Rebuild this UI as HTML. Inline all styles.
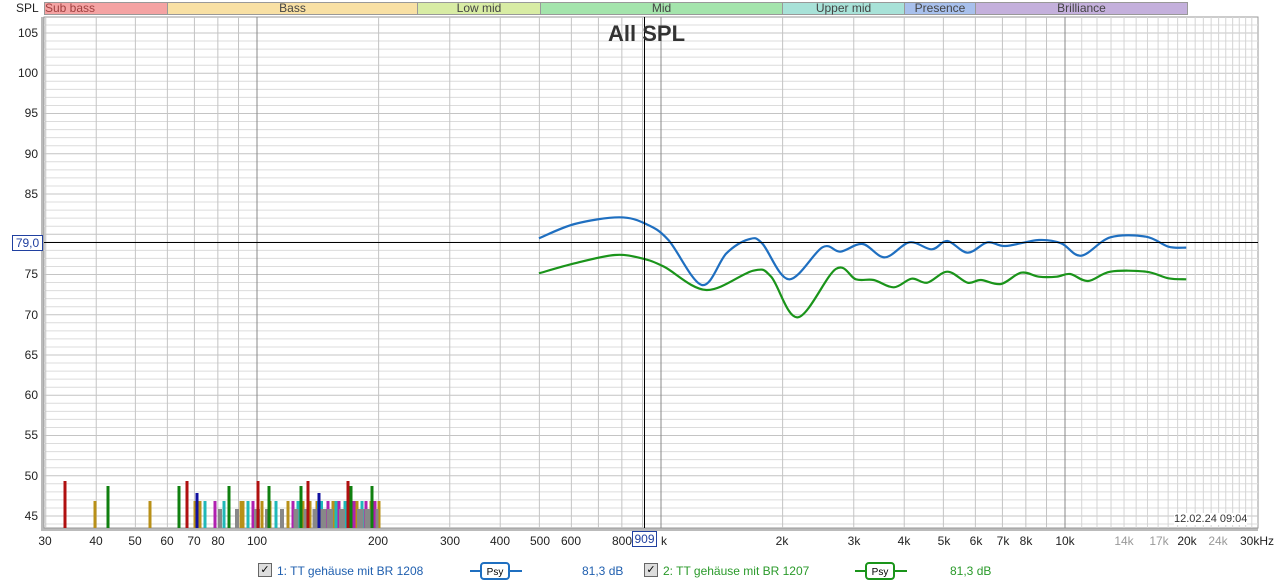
<!DOCTYPE html>
<html><head><meta charset="utf-8">
<style>
html,body{margin:0;padding:0;background:#fff;width:1280px;height:585px;overflow:hidden;font-family:"Liberation Sans",Arial,sans-serif;}
.t{position:absolute;font-size:12px;color:#222;white-space:nowrap;}
.band{position:absolute;top:2px;height:13px;border:1px solid #999;box-sizing:border-box;font-size:12px;line-height:11px;text-align:center;color:#444;}
.yl{position:absolute;left:0;width:38px;text-align:right;font-size:12px;color:#222;}
.xl{position:absolute;top:534px;font-size:12px;color:#222;transform:translateX(-50%);}
.lg{position:absolute;top:564px;font-size:12px;}
.cb{position:absolute;top:563px;width:12px;height:12px;border:1px solid #666;background:#ddd;font-size:11px;line-height:12px;text-align:center;color:#000;}
</style></head><body>
<svg id="s" width="1280" height="585" style="position:absolute;left:0;top:0"></svg>

<div class="t" style="left:16px;top:1px">SPL</div>
<div class="band" style="left:44px;width:124px;background:#f4a3a3;text-align:left;color:#a04040">Sub bass</div>
<div class="band" style="left:167px;width:251px;background:#f8e0a4">Bass</div>
<div class="band" style="left:417px;width:124px;background:#d8eca4">Low mid</div>
<div class="band" style="left:540px;width:243px;background:#a4e4ac">Mid</div>
<div class="band" style="left:782px;width:123px;background:#a8e2d8">Upper mid</div>
<div class="band" style="left:904px;width:72px;background:#a8c0ec">Presence</div>
<div class="band" style="left:975px;width:213px;background:#c4b0dc">Brilliance</div>

<div class="t" style="left:608px;top:21px;font-size:22px;font-weight:bold;color:#333">All SPL</div>

<div class="yl" style="top:26px">105</div>
<div class="yl" style="top:66px">100</div>
<div class="yl" style="top:106px">95</div>
<div class="yl" style="top:147px">90</div>
<div class="yl" style="top:187px">85</div>
<div class="yl" style="top:267px">75</div>
<div class="yl" style="top:308px">70</div>
<div class="yl" style="top:348px">65</div>
<div class="yl" style="top:388px">60</div>
<div class="yl" style="top:428px">55</div>
<div class="yl" style="top:469px">50</div>
<div class="yl" style="top:509px">45</div>
<div class="t" style="left:12px;top:235px;width:29px;height:14px;border:1px solid #2040a0;background:#fff;color:#2040a0;text-align:center;line-height:14px">79,0</div>

<div class="xl" style="left:45px">30</div>
<div class="xl" style="left:96px">40</div>
<div class="xl" style="left:135px">50</div>
<div class="xl" style="left:167px">60</div>
<div class="xl" style="left:194px">70</div>
<div class="xl" style="left:218px">80</div>
<div class="xl" style="left:257px">100</div>
<div class="xl" style="left:378px">200</div>
<div class="xl" style="left:450px">300</div>
<div class="xl" style="left:500px">400</div>
<div class="xl" style="left:540px">500</div>
<div class="xl" style="left:571px">600</div>
<div class="xl" style="left:622px">800</div>
<div class="xl" style="left:664px">k</div>
<div class="t" style="left:632px;top:531px;width:23px;height:14px;border:1px solid #2040a0;background:#fff;color:#2040a0;text-align:center;line-height:14px">909</div>
<div class="xl" style="left:782px">2k</div>
<div class="xl" style="left:854px">3k</div>
<div class="xl" style="left:904px">4k</div>
<div class="xl" style="left:944px">5k</div>
<div class="xl" style="left:976px">6k</div>
<div class="xl" style="left:1003px">7k</div>
<div class="xl" style="left:1026px">8k</div>
<div class="xl" style="left:1065px">10k</div>
<div class="xl" style="left:1124px;color:#999">14k</div>
<div class="xl" style="left:1159px;color:#999">17k</div>
<div class="xl" style="left:1187px">20k</div>
<div class="xl" style="left:1218px;color:#999">24k</div>
<div class="xl" style="left:1257px">30kHz</div>
<div class="t" style="left:1174px;top:513px;font-size:11px;color:#333;background:#fff">12.02.24 09:04</div>

<div class="cb" style="left:258px">✓</div>
<div class="lg" style="left:277px;color:#1f5faf">1: TT gehäuse mit BR 1208</div>
<div class="lg" style="left:582px;color:#1f5faf">81,3 dB</div>
<div class="cb" style="left:644px">✓</div>
<div class="lg" style="left:663px;color:#2a9a2a">2: TT gehäuse mit BR 1207</div>
<div class="lg" style="left:950px;color:#2a9a2a">81,3 dB</div>

<script>
var s=document.getElementById('s'),h='';
function X(f){return 257+404*Math.log10(f/100);}
function Y(d){return 33+(105-d)*8.05;}
var L=44,R=1258,T=17,B=528;
h+='<rect x="'+(L-3)+'" y="'+T+'" width="3" height="'+(B-T+3)+'" fill="#bbb"/><rect x="'+(L-3)+'" y="'+B+'" width="'+(R-L+3)+'" height="3" fill="#bbb"/>';
h+='<rect x="'+L+'" y="'+T+'" width="'+(R-L)+'" height="'+(B-T)+'" fill="#fff" stroke="#999"/>';
for(var d=44;d<=107;d++){var y=Y(d);if(y<T||y>B)continue;h+='<line x1="'+L+'" x2="'+R+'" y1="'+y+'" y2="'+y+'" stroke="'+(d%5==0?'#c4c4c4':'#dcdcdc')+'"/>';}
var fs=[];
[10,100,1000].forEach(function(dec){for(var k=1;k<10;k++)fs.push([dec*k,k==1]);});
for(var k=10;k<=30;k++)fs.push([k*1000,k==10]);
fs.forEach(function(p){var x=X(p[0]);if(x<L+1||x>R-1)return;var c=p[1]?'#888':'#c4c4c4';if(p[0]>10000)c='#d4d4d4';h+='<line x1="'+x+'" x2="'+x+'" y1="'+T+'" y2="'+B+'" stroke="'+c+'"/>';});
var C={r:'#b01010',g:'#108010',n:'#1010a0',o:'#b89018',c:'#20b8b8',m:'#b020b0',y:'#888'};
var H={r:481,g:486,n:493,o:501,c:501,m:501,y:509};
h+='<rect x="322" y="509" width="56" height="19" fill="#888"/>';
var bars=[[65,'r'],[95,'o'],[108,'g'],[150,'o'],[179,'g'],[187,'r'],[195,'o'],[200,'o'],[197,'n'],[205,'c'],[215,'m'],[220,'y',4],[224,'c'],[229,'g'],[237,'y',4],[242,'o',5],[248,'c'],[253,'m'],[257,'y',6],[262,'o'],[258,'r'],[267,'y',4],[270,'o'],[269,'g'],[276,'c'],[282,'y',4],[288,'o'],[293,'m'],[296,'y',5],[298,'c'],[303,'o'],[301,'g'],[310,'o'],[306,'y',5],[308,'r'],[315,'y',5],[317,'o'],[320,'c',6],[322,'y',5],[319,'n'],[328,'m'],[330,'y',6],[333,'o'],[336,'c'],[339,'m'],[342,'y',6],[345,'c'],[348,'r'],[350,'y',5],[351,'g'],[354,'m'],[357,'o'],[360,'y',6],[362,'c'],[366,'m'],[368,'y',6],[371,'o'],[372,'g'],[375,'m'],[377,'y',3],[379,'o']];
var order=['o','c','m','y','n','g','r'];
bars.sort(function(a,b){return order.indexOf(a[1])-order.indexOf(b[1]);});
bars.forEach(function(b){var w=b[2]||3;h+='<rect x="'+(b[0]-w/2)+'" y="'+H[b[1]]+'" width="'+w+'" height="'+(B-H[b[1]])+'" fill="'+C[b[1]]+'"/>';});
function curve(pts,col){var P=pts.map(function(p){return [530+p[0]/2.24,200+p[1]/3];});var d='M'+P[0][0]+','+P[0][1];for(var i=0;i<P.length-1;i++){var p0=P[i-1]||P[i],p1=P[i],p2=P[i+1],p3=P[i+2]||p2;d+=' C'+(p1[0]+(p2[0]-p0[0])/6)+','+(p1[1]+(p2[1]-p0[1])/6)+' '+(p2[0]-(p3[0]-p1[0])/6)+','+(p2[1]-(p3[1]-p1[1])/6)+' '+p2[0]+','+p2[1];}h+='<path d="'+d+'" fill="none" stroke="'+col+'" stroke-width="2.2"/>';}
curve([[20,115],[100,72],[200,52],[260,72],[310,120],[385,255],[440,160],[490,118],[520,130],[580,238],[655,142],[695,155],[745,132],[795,172],[850,127],[900,148],[935,123],[980,158],[1025,127],[1065,138],[1140,120],[1190,130],[1235,167],[1300,112],[1380,110],[1430,140],[1470,143]],'#1f6fc0');
curve([[20,220],[100,190],[190,165],[250,175],[300,200],[395,270],[500,212],[540,230],[600,352],[685,207],[730,238],[770,240],[815,262],[855,236],[890,248],[935,215],[980,248],[1010,240],[1055,252],[1100,218],[1140,230],[1180,230],[1210,222],[1250,243],[1300,215],[1380,215],[1430,235],[1470,238]],'#1a941a');
h+='<line x1="'+L+'" x2="'+R+'" y1="242.5" y2="242.5" stroke="#000"/><line x1="644.5" x2="644.5" y1="'+T+'" y2="'+B+'" stroke="#000"/>';
[[470,'#1f6fc0'],[855,'#1a941a']].forEach(function(p){var x=p[0];h+='<line x1="'+x+'" x2="'+(x+52)+'" y1="571" y2="571" stroke="'+p[1]+'" stroke-width="2"/><rect x="'+(x+11)+'" y="563" width="28" height="16" rx="3" fill="#fff" stroke="'+p[1]+'" stroke-width="2"/><text x="'+(x+25)+'" y="575" font-size="10" text-anchor="middle" font-family="Liberation Sans" fill="#000">Psy</text>';});
s.innerHTML=h;
</script>
</body></html>
